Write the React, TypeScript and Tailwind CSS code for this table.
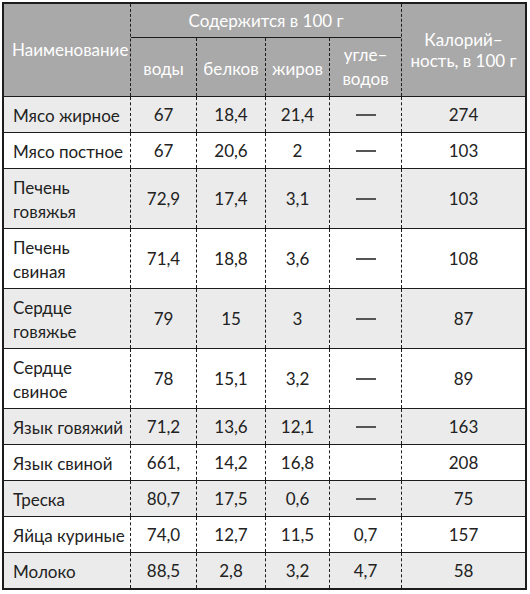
const rows: { name: string[]; v: string[]; cal: string }[] = [
  { name: ["Мясо жирное"], v: ["67", "18,4", "21,4", "—"], cal: "274" },
  { name: ["Мясо постное"], v: ["67", "20,6", "2", "—"], cal: "103" },
  { name: ["Печень", "говяжья"], v: ["72,9", "17,4", "3,1", "—"], cal: "103" },
  { name: ["Печень", "свиная"], v: ["71,4", "18,8", "3,6", "—"], cal: "108" },
  { name: ["Сердце", "говяжье"], v: ["79", "15", "3", "—"], cal: "87" },
  { name: ["Сердце", "свиное"], v: ["78", "15,1", "3,2", "—"], cal: "89" },
  { name: ["Язык говяжий"], v: ["71,2", "13,6", "12,1", "—"], cal: "163" },
  { name: ["Язык свиной"], v: ["661,", "14,2", "16,8", ""], cal: "208" },
  { name: ["Треска"], v: ["80,7", "17,5", "0,6", "—"], cal: "75" },
  { name: ["Яйца куриные"], v: ["74,0", "12,7", "11,5", "0,7"], cal: "157" },
  { name: ["Молоко"], v: ["88,5", "2,8", "3,2", "4,7"], cal: "58" },
];

const widths = ["w-[66px]", "w-[69px]", "w-[64px]", "w-[72px]"];

export default function App() {
  return (
    <div className="pt-[2px] pl-[2px] bg-white min-h-screen">
      <div
        className="w-[525px] border-2 border-[#1c1c1c] text-[17px] text-[#222] whitespace-nowrap"
        style={{ fontFamily: "Lato, 'Open Sans', sans-serif" }}
      >
        {/* header */}
        <div className="flex bg-[#a9a9a9] text-white border-b border-[#1c1c1c]">
          <div className="w-[126px] flex items-center pl-2">Наименование</div>
          <div className="w-[271px] border-l border-dashed border-[#1c1c1c]">
            <div className="h-[34px] border-b border-[#1c1c1c] flex items-center justify-center">
              Содержится в 100 г
            </div>
            <div className="flex h-[58px]">
              <div className="w-[65px] flex items-center justify-center pt-1">воды</div>
              <div className="w-[69px] border-l border-dashed border-[#1c1c1c] flex items-center justify-center pt-1">
                белков
              </div>
              <div className="w-[64px] border-l border-dashed border-[#1c1c1c] flex items-center justify-center pt-1">
                жиров
              </div>
              <div className="w-[72px] border-l border-dashed border-[#1c1c1c] flex flex-col items-center justify-center leading-6">
                <span>угле–</span>
                <span>водов</span>
              </div>
            </div>
          </div>
          <div className="w-[124px] border-l border-dashed border-[#1c1c1c] flex flex-col items-center justify-center leading-[21px]">
            <span>Калорий–</span>
            <span>ность, в 100 г</span>
          </div>
        </div>

        {/* body */}
        {rows.map((r, i) => {
          const last = i === rows.length - 1;
          const tall = r.name.length > 1;
          return (
            <div
              key={i}
              className={`flex ${i % 2 === 0 ? "bg-[#ebebeb]" : "bg-white"} ${
                last ? "h-[35px]" : "border-b border-[#1c1c1c] " + (tall ? "h-[60px]" : "h-[36px]")
              }`}
            >
              <div className="w-[126px] flex flex-col justify-center pl-[9px] pt-[2px] leading-6">
                {r.name.map((n) => (
                  <span key={n}>{n}</span>
                ))}
              </div>
              {r.v.map((v, j) => (
                <div
                  key={j}
                  className={`${widths[j]} border-l border-dashed border-[#1c1c1c] flex items-center justify-center`}
                >
                  {v === "—" ? <span className="inline-block w-[20px] h-[2px] bg-[#555]" /> : v}
                </div>
              ))}
              <div className="w-[124px] border-l border-dashed border-[#1c1c1c] flex items-center justify-center">
                {r.cal}
              </div>
            </div>
          );
        })}
      </div>
    </div>
  );
}
